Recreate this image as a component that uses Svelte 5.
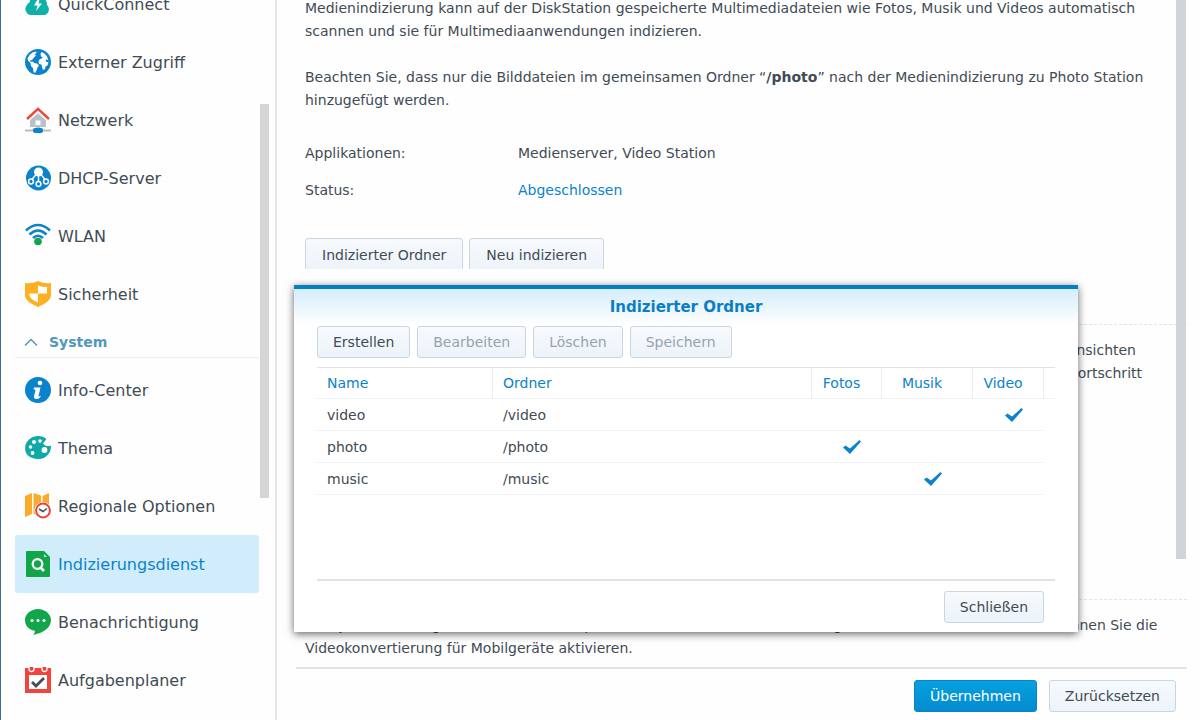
<script>
  const network = [
    { id: "quick", label: "QuickConnect" },
    { id: "globe", label: "Externer Zugriff" },
    { id: "house", label: "Netzwerk" },
    { id: "dhcp", label: "DHCP-Server" },
    { id: "wifi", label: "WLAN" },
    { id: "shield", label: "Sicherheit" },
  ];

  const system = [
    { id: "info", label: "Info-Center" },
    { id: "theme", label: "Thema" },
    { id: "region", label: "Regionale Optionen" },
    { id: "index", label: "Indizierungsdienst" },
    { id: "notify", label: "Benachrichtigung" },
    { id: "tasks", label: "Aufgabenplaner" },
  ];

  let active = $state("index");
  let systemOpen = $state(true);
  let dialogOpen = $state(true);

  const folders = [
    { name: "video", path: "/video", types: ["video"] },
    { name: "photo", path: "/photo", types: ["photo"] },
    { name: "music", path: "/music", types: ["music"] },
  ];
  const types = ["photo", "music", "video"];
</script>

{#snippet icon(id)}
  <svg class="icon" viewBox="0 0 26 26" aria-hidden="true">
    {#if id === "quick"}
      <path fill="#0fb0a8" d="M6 24a6 6 0 0 1-4-10 5 5 0 0 1 3-3 8 8 0 0 1 16-1 5 5 0 0 1 1 4 6 6 0 0 1-2 10z" />
      <path fill="#fff" d="M13.500 7 9 14.500h3.500L11 20l6-7.500h-3.500l1.500-5.500z" />
    {:else if id === "globe"}
      <circle cx="13" cy="13" r="13" fill="#0a82cc" />
      <path fill="#fff" d="M7.500 3.500 11 2.500l.5 1.500-2 1.500 1.500 1-2.500 2.500-1.500 2-2 .5 1 1.500 2-.5 1 1.500 3 .5 2 2-1.500 2-1 3-1.500 2.500-1.500-1-.5-4L6 17l-.5-3L3 11.500 2.500 9.500 4.500 6z" />
      <path fill="#fff" d="m15.500 5 1-2 3 1.500 2.500 3 1.500 4-1.500-1-1.500.5 1 2h2l-1 3.500-2 1-.5 2.500-2 1-1-3-.5-2.500-2.500-.5-.5-3 1.500-2 2-.5.5-1.500-1.500-.5z" />
    {:else if id === "house"}
      <path fill="#b9c2cb" d="M5 12 13 5l8 7v8h-6v2h-4v-2H5z" />
      <path fill="none" stroke="#fff" stroke-width="1" d="M4 13.500 13 5.800l9 7.700" />
      <path fill="#fff" d="M10.500 13.500h5v4.500h-5z" />
      <path fill="none" stroke="#f0443c" stroke-width="2.400" d="M2 12 13 1.800 24 12" />
      <path stroke="#b9bfc5" stroke-width="2" d="M0 23.500h26" />
      <rect x="8" y="21" width="10" height="5" rx="2" fill="#0a82cc" />
    {:else if id === "dhcp"}
      <circle cx="13.500" cy="13" r="12.500" fill="#0a82cc" />
      <path stroke="#fff" stroke-width="1.400" d="M11 9.500 6.500 15M16 9.500l4.500 5.500M13.500 10v7" />
      <circle cx="13.500" cy="7" r="4.500" fill="#fff" />
      <g fill="#0a82cc" stroke="#fff" stroke-width="1.500">
        <circle cx="6" cy="16.500" r="2.400" />
        <circle cx="21" cy="16.500" r="2.400" />
        <circle cx="13.500" cy="19" r="2.400" />
      </g>
    {:else if id === "wifi"}
      <g fill="none" stroke="#0a82cc" stroke-width="2.600">
        <path d="M1 7.500q12-11 24 0M4.500 11.500q8.500-8 17 0M8 15q5-4.500 10 0" />
      </g>
      <circle cx="13" cy="18.500" r="3.800" fill="#12a54a" />
    {:else if id === "shield"}
      <path fill="#fdb022" d="M0 2q7 1 13-2 6 3 13 2v13q-1 6-13 11Q1 21 0 15z" />
      <path fill="#fff" d="M13 4.500q4 1.500 9 1.500v6.500h-9zM4.500 12.500H13v9Q6 18.500 4.500 15z" />
    {:else if id === "info"}
      <circle cx="13" cy="13" r="13" fill="#0a82cc" />
      <circle cx="15" cy="6" r="2.300" fill="#fff" />
      <path fill="#fff" d="M9 10.500h6.500L13.500 19q-.2 1 2.500-.2-1.500 3.200-4.500 3.200-3 0-2.500-2.700l1.500-6q.2-1-2-1z" />
    {:else if id === "theme"}
      <path fill="#10aaa6" d="M21.500 4C17 0 9 0 4 4.500s-5 12-1 16 13 5 18 1c4-3 5-7 5-10.500h-5l-3-2.500z" />
      <g fill="#fff">
        <circle cx="15" cy="6" r="1.800" />
        <circle cx="9" cy="7" r="2" />
        <circle cx="5.500" cy="12" r="1.800" />
        <circle cx="7.500" cy="18" r="1.900" />
        <circle cx="19.500" cy="15" r="2.900" />
      </g>
    {:else if id === "region"}
      <path fill="#fbab2a" d="m0 3 7-3v21l-7 3zM8.500 0 16 2.500v21L8.500 21zM17.500 3 24 0v16l-6.500 4z" />
      <circle cx="18" cy="17.500" r="8.500" fill="#fff" />
      <circle cx="18" cy="17.500" r="6.900" fill="#fff" stroke="#ee403c" stroke-width="2" />
      <path fill="none" stroke="#444e57" stroke-width="1.500" d="m14 16 4 2.500 4-3" />
    {:else if id === "index"}
      <path fill="#12a54a" d="M2 0h17l6 6v19q0 1-1 1H2q-1 0-1-1V1q0-1 1-1z" />
      <path fill="#cdebe0" d="m19 3 3 3h-3z" />
      <circle cx="12.500" cy="13" r="4.800" fill="none" stroke="#fff" stroke-width="2.300" />
      <path stroke="#fff" stroke-width="2.600" d="m15 16 4 4" />
    {:else if id === "notify"}
      <path fill="#12a54a" d="M13 0c7 0 13 5 13 11 0 8-8 13-18 15 2-2 2-3 1.500-4.500C4 21 0 17 0 11 0 5 6 0 13 0z" />
      <g fill="#fff">
        <circle cx="7" cy="11.500" r="1.500" />
        <circle cx="13" cy="11.500" r="1.500" />
        <circle cx="19" cy="11.500" r="1.500" />
      </g>
    {:else if id === "tasks"}
      <path fill="#f0443c" d="M0 1h26v25H0z" />
      <path fill="#fff" d="M4 8h18v14H4z" />
      <g fill="#f0443c" stroke="#fff" stroke-width="1.300">
        <path d="M4 0v2a2.500 2.500 0 0 0 5 0V0M17 0v2a2.500 2.500 0 0 0 5 0V0" />
      </g>
      <path fill="none" stroke="#444e57" stroke-width="2.800" d="m7 15 4 4 8-8" />
    {/if}
  </svg>
{/snippet}

{#snippet entry(item)}
  <li>
    <a href="#{item.id}" class="item" class:active={active === item.id} onclick={() => (active = item.id)}>
      {@render icon(item.id)}
      <span>{item.label}</span>
    </a>
  </li>
{/snippet}

<div class="panel">
  <aside class="sidebar">
    <nav>
      <ul>
        {#each network as item}
          {@render entry(item)}
        {/each}
      </ul>
      <button class="group" onclick={() => (systemOpen = !systemOpen)}>
        <svg class="chevron" viewBox="0 0 14 8" aria-hidden="true">
          <path d="M1 7.500 7 1.500l6 6" />
        </svg>
        System
      </button>
      {#if systemOpen}
        <ul>
          {#each system as item}
            {@render entry(item)}
          {/each}
        </ul>
      {/if}
    </nav>
    <div class="track"><div class="thumb"></div></div>
  </aside>

  <main>
    <div class="content">
      <section class="intro">
        <p>
          Medienindizierung kann auf der DiskStation gespeicherte Multimediadateien wie Fotos, Musik und Videos automatisch
          scannen und sie für Multimediaanwendungen indizieren.
        </p>
        <p>
          Beachten Sie, dass nur die Bilddateien im gemeinsamen Ordner “<b>/photo</b>” nach der Medienindizierung zu Photo Station
          hinzugefügt werden.
        </p>
        <dl>
          <dt>Applikationen:</dt>
          <dd>Medienserver, Video Station</dd>
          <dt>Status:</dt>
          <dd class="done">Abgeschlossen</dd>
        </dl>
        <div class="actions">
          <button class="btn" onclick={() => (dialogOpen = true)}>Indizierter Ordner</button>
          <button class="btn">Neu indizieren</button>
        </div>
      </section>

      <section class="quality">
        <p>Miniaturansichten</p>
        <p>Fortschritt</p>
      </section>

      <section class="convert">
        <p>
          Falls je die Wiedergabe in dem Ordner „photo“ auf einem Ihrer neuen Mobilgeräte nicht mehr funktioniert, können Sie die
          Videokonvertierung für Mobilgeräte aktivieren.
        </p>
      </section>
      <div class="main-thumb"></div>
    </div>

    <footer>
      <button class="btn primary">Übernehmen</button>
      <button class="btn">Zurücksetzen</button>
    </footer>

    {#if dialogOpen}
      <div class="dialog" role="dialog" aria-labelledby="dialog-title">
        <h2 id="dialog-title">Indizierter Ordner</h2>
        <div class="toolbar">
          <button class="btn">Erstellen</button>
          <button class="btn" disabled>Bearbeiten</button>
          <button class="btn" disabled>Löschen</button>
          <button class="btn" disabled>Speichern</button>
        </div>
        <div class="grid">
          <table>
            <colgroup>
              <col class="c-name" />
              <col />
              <col class="c-photo" />
              <col class="c-music" />
              <col class="c-video" />
              <col class="c-end" />
            </colgroup>
            <thead>
              <tr>
                <th>Name</th>
                <th>Ordner</th>
                <th class="type">Fotos</th>
                <th class="type">Musik</th>
                <th class="type">Video</th>
                <th class="end"></th>
              </tr>
            </thead>
            <tbody>
              {#each folders as folder}
                <tr>
                  <td>{folder.name}</td>
                  <td>{folder.path}</td>
                  {#each types as type}
                    <td class="check">
                      {#if folder.types.includes(type)}
                        <svg viewBox="0 0 18 14" role="img" aria-label="Ja">
                          <path d="M0 7.500 2.500 5.500 7 8.500 16.500 0 18 1.500 7 14z" />
                        </svg>
                      {/if}
                    </td>
                  {/each}
                </tr>
              {/each}
            </tbody>
          </table>
        </div>
        <div class="dialog-footer">
          <button class="btn" onclick={() => (dialogOpen = false)}>Schließen</button>
        </div>
      </div>
    {/if}
  </main>
</div>

<style>
  :global(body) {
    margin: 0;
    background: #fff;
  }

  .panel {
    display: flex;
    height: 100vh;
    box-sizing: border-box;
    overflow: hidden;
    border-left: 1px solid #3f6c9e;
    background: #fefefe;
    color: #414b55;
    font-family: Verdana, "DejaVu Sans", sans-serif;
    font-size: 14px;
    line-height: 23px;
  }

  .sidebar {
    display: flex;
    flex: 0 0 274px;
    border-right: 2px solid #e4e4e4;
    overflow: hidden;
  }

  nav {
    flex: 1;
    margin-top: -25px;
    padding-left: 14px;
  }

  ul {
    margin: 0;
    padding: 0;
    list-style: none;
  }

  .item {
    display: flex;
    align-items: center;
    gap: 7px;
    height: 58px;
    padding-left: 10px;
    border-radius: 3px;
    color: #414b55;
    font-size: 16px;
    text-decoration: none;
    white-space: nowrap;
  }

  .item.active {
    background: #d1edfc;
    color: #0a82cc;
  }

  .icon {
    width: 26px;
    height: 26px;
    flex: none;
  }

  .group {
    display: flex;
    align-items: center;
    gap: 11px;
    width: 100%;
    height: 35px;
    margin-bottom: 3px;
    padding: 4px 0 0 9px;
    border: 0;
    border-bottom: 1px solid #ebeef0;
    background: none;
    color: #5198bd;
    font: bold 14px Verdana, "DejaVu Sans", sans-serif;
  }

  .chevron {
    width: 14px;
    height: 8px;
    fill: none;
    stroke: #5198bd;
    stroke-width: 1.5;
  }

  .track {
    flex: 0 0 9px;
    padding: 104px 6px 0 1px;
  }

  .thumb {
    height: 394px;
    background: #d5d5d5;
  }

  main {
    position: relative;
    display: flex;
    flex: 1;
    flex-direction: column;
    min-width: 0;
    padding: 0 13px 0 19px;
  }

  .content {
    position: relative;
    flex: 1;
    min-height: 0;
    overflow: hidden;
  }

  p {
    margin: 0;
  }

  .intro {
    margin-top: -3px;
    padding: 0 20px 0 9px;
  }

  .intro p {
    margin-bottom: 23px;
  }

  dl {
    display: grid;
    grid-template-columns: 213px 1fr;
    margin: 0 0 29px;
    line-height: 37px;
  }

  dd {
    margin: 0;
  }

  .done {
    color: #0a82cc;
  }

  .actions {
    display: flex;
    gap: 6px;
    height: 31px;
    overflow: hidden;
  }

  .actions .btn {
    height: 34px;
    padding: 0 16px;
  }

  .quality,
  .convert {
    border-top: 1px dashed #dfe4e8;
  }

  .quality {
    height: 260px;
    margin-top: 55px;
    padding: 14px 45px 0 9px;
    text-align: right;
  }

  .quality p:first-child {
    padding-right: 6px;
  }

  .convert {
    padding: 14px 20px 0 9px;
  }

  .main-thumb {
    position: absolute;
    top: 0;
    right: 1px;
    width: 10px;
    height: 559px;
    background: #d2d5d8;
  }

  footer {
    display: flex;
    justify-content: flex-end;
    gap: 12px;
    padding: 11px 11px 8px;
    border-top: 2px solid #e2e2e2;
  }

  .btn {
    height: 32px;
    padding: 0 15px;
    border: 1px solid #c9d6df;
    border-radius: 3px;
    background: linear-gradient(#f7fafd, #ecf3fa);
    color: #414b55;
    font: 14px Verdana, "DejaVu Sans", sans-serif;
    white-space: nowrap;
  }

  .btn:disabled {
    color: #98a3ac;
  }

  .btn.primary {
    border-color: #0a84c8;
    background: linear-gradient(#05a1e0, #048bcf);
    color: #fff;
  }

  .dialog {
    position: absolute;
    top: 285px;
    left: 17px;
    right: 122px;
    box-sizing: border-box;
    padding: 0 23px 9px;
    border-top: 4px solid #0680bd;
    background: linear-gradient(#d4edfb, #fff 36px);
    box-shadow: 0 2px 8px rgba(0, 0, 0, 0.6);
  }

  h2 {
    margin: 0;
    color: #0a7fc6;
    font-size: 15px;
    line-height: 37px;
    text-align: center;
  }

  .toolbar {
    display: flex;
    gap: 7px;
    margin-bottom: 9px;
  }

  .grid {
    height: 212px;
    border-bottom: 2px solid #e2e2e2;
  }

  table {
    width: 100%;
    table-layout: fixed;
    border-collapse: separate;
    border-spacing: 0;
  }

  .c-name {
    width: 176px;
  }

  .c-photo {
    width: 70px;
  }

  .c-music {
    width: 91px;
  }

  .c-video {
    width: 71px;
  }

  .c-end {
    width: 11px;
  }

  th,
  td {
    box-sizing: border-box;
    height: 32px;
    padding: 1px 10px 0;
    border-bottom: 1px solid #eff1f3;
    text-align: left;
  }

  th {
    border-top: 1px solid #dfe3e6;
    border-right: 1px solid #e9edf0;
    color: #0a82cc;
    font-weight: normal;
  }

  th.type {
    padding: 1px 10px 0 0;
    text-align: center;
  }

  th.end {
    padding: 0;
    border-right: 0;
  }

  td.check {
    padding: 0 0 0 10px;
    text-align: center;
  }

  td svg {
    display: inline-block;
    width: 18px;
    height: 14px;
    vertical-align: middle;
    fill: #0a82cc;
  }

  .dialog-footer {
    display: flex;
    justify-content: flex-end;
    padding: 10px 11px 0 0;
  }
</style>
